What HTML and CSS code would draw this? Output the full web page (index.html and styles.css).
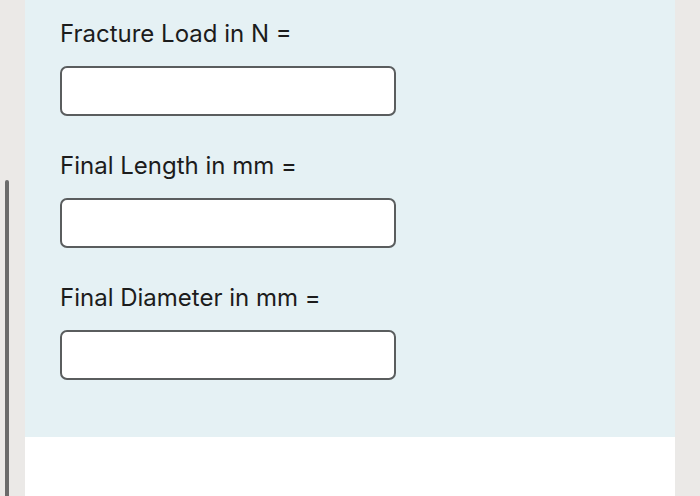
FILE: index.html
```html
<!DOCTYPE html>
<html>
<head>
<meta charset="utf-8">
<link rel="stylesheet" href="styles.css">
</head>
<body>
<div class="page">
  <div class="side side-left"><div class="scrollbar"></div></div>
  <div class="main">
    <div class="panel">
      <div class="field">
        <div class="label">Fracture Load in N =</div>
        <div class="input"></div>
      </div>
      <div class="field">
        <div class="label">Final Length in mm =</div>
        <div class="input"></div>
      </div>
      <div class="field">
        <div class="label">Final Diameter in mm =</div>
        <div class="input"></div>
      </div>
    </div>
    <div class="footer"></div>
  </div>
  <div class="side side-right"></div>
</div>
</body>
</html>
```
FILE: styles.css
```css
html, body {
  margin: 0;
  padding: 0;
  width: 700px;
  height: 496px;
  overflow: hidden;
  background: #ebe9e7;
  font-family: Inter, "Liberation Sans", sans-serif;
}
.page {
  display: flex;
  width: 700px;
  height: 496px;
}
.side {
  width: 25px;
  background: #ebe9e7;
  flex: none;
}
.side-left {
  padding-top: 180px;
  box-sizing: border-box;
}
.scrollbar {
  margin-left: 5px;
  width: 4px;
  height: 316px;
  background: #6b6b6b;
  border-radius: 2px 2px 0 0;
}
.main {
  width: 650px;
  display: flex;
  flex-direction: column;
}
.panel {
  background: #e5f1f4;
  height: 437px;
  box-sizing: border-box;
  padding: 20px 0 0 35px;
}
.footer {
  flex: 1;
  background: #ffffff;
}
.field {
  height: 132px;
}
.label {
  font-size: 24px;
  line-height: 28px;
  color: #1c1c1c;
}
.input {
  margin-top: 18px;
  width: 332px;
  height: 46px;
  background: #fff;
  border: 2px solid #5a5d5e;
  border-radius: 7px;
}
```
